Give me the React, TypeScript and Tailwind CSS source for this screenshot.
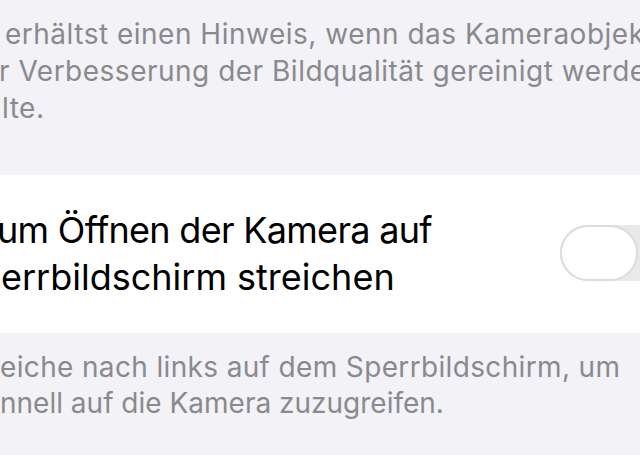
export default function App() {
  return (
    <div className="h-[455px] w-[640px] overflow-hidden bg-[#f2f2f7] font-['Inter','Noto_Sans',sans-serif]">
      {/* Footer of previous group */}
      <div className="pt-[16px] text-[28px] leading-[37px] tracking-[0.5px] text-[#8a8a8e] whitespace-nowrap">
        <div className="pl-[5px]">erhältst einen Hinweis, wenn das Kameraobjektiv</div>
        <div className="ml-[-1px]">r Verbesserung der Bildqualität gereinigt werden</div>
        <div className="pl-[2px]">lte.</div>
      </div>

      {/* Toggle row */}
      <div className="mt-[48px] flex h-[158px] items-center justify-between bg-white">
        <div className="text-[36px] leading-[47px] text-black whitespace-nowrap">
          <div className="ml-[-3px] tracking-[-0.7px]">um Öffnen der Kamera auf</div>
          <div className="pl-[1px]">errbildschirm streichen</div>
        </div>
        <div className="relative mb-[2px] mr-[-30px] h-[56px] w-[110px] shrink-0 rounded-full bg-[#e9e9eb]">
          <div className="absolute left-0 top-0 h-[56px] w-[78px] rounded-full border-2 border-[#dcdcdc] bg-white" />
        </div>
      </div>

      {/* Footer */}
      <div className="mt-[16px] text-[28px] leading-[36px] text-[#8a8a8e] whitespace-nowrap">
        <div className="tracking-[0.35px]">eiche nach links auf dem Sperrbildschirm, um</div>
        <div>nnell auf die Kamera zuzugreifen.</div>
      </div>
    </div>
  );
}
